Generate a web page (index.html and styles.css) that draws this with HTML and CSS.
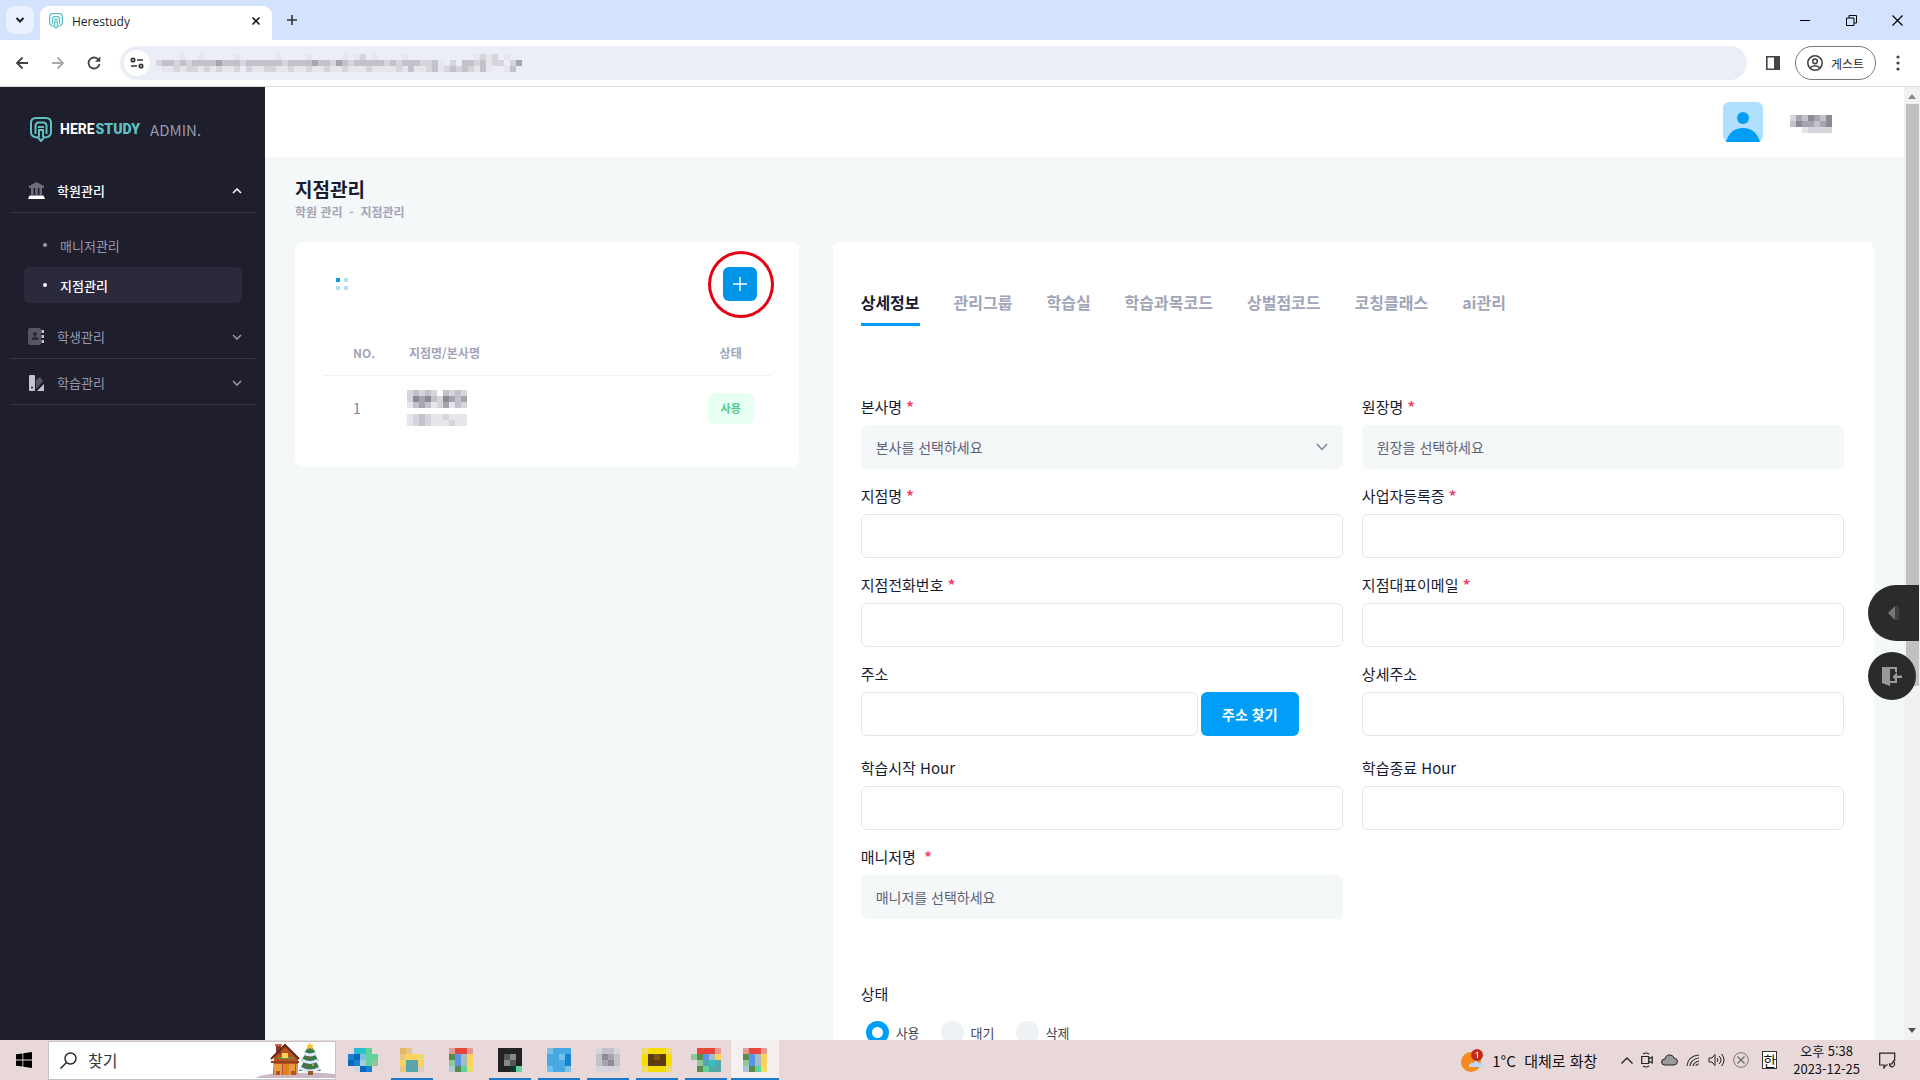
FILE: index.html
```html
<!DOCTYPE html>
<html lang="ko">
<head>
    <meta charset="UTF-8">
    <meta name="viewport" content="width=device-width, initial-scale=1.0">
    <link rel="stylesheet" href="styles.css">
    <title>Herestudy</title>
</head>
<body>
    <!-- browser -->
    <div class="tabstrip">
        <button class="tab-search" aria-label="탭 검색"><svg width="10" height="8" viewBox="0 0 10 8"><path d="M1.5 2l3.5 3.5L8.500 2" fill="none" stroke="#1f1f1f" stroke-width="2"/></svg></button>
        <div class="tab">
            <svg width="14" height="16" viewBox="0 0 22 25"><use href="#logo"/></svg>
            <span>Herestudy</span>
            <button aria-label="탭 닫기"><svg width="10" height="10" viewBox="0 0 10 10"><path d="M1.500 1.500l7 7m0-7l-7 7" stroke="#1f1f1f" stroke-width="1.700"/></svg></button>
        </div>
        <button class="new-tab" aria-label="새 탭"><svg width="12" height="12" viewBox="0 0 12 12"><path d="M6 1v10M1 6h10" stroke="#333" stroke-width="1.600"/></svg></button>
        <div class="window-buttons">
            <button aria-label="최소화"><svg width="10" height="10" viewBox="0 0 10 10"><path d="M0 5.500h10" stroke="#000"/></svg></button>
            <button aria-label="이전 크기로"><svg width="11" height="11" viewBox="0 0 11 11"><path d="M.5 3h7.500v7.500H.5zM3 3V.5h7.500V8H8" fill="none" stroke="#000"/></svg></button>
            <button aria-label="닫기"><svg width="11" height="11" viewBox="0 0 11 11"><path d="M.5.5l10 10m0-10l-10 10" stroke="#000" stroke-width="1.200"/></svg></button>
        </div>
    </div>

    <div class="toolbar">
        <button aria-label="뒤로"><svg width="14" height="14" viewBox="0 0 14 14"><path d="M13 7H2m5.500-5.500L2 7l5.500 5.500" fill="none" stroke="#444" stroke-width="1.800"/></svg></button>
        <button aria-label="앞으로"><svg width="14" height="14" viewBox="0 0 14 14"><path d="M1 7h11M6.500 1.500L12 7l-5.500 5.500" fill="none" stroke="#aaa" stroke-width="1.800"/></svg></button>
        <button aria-label="새로고침"><svg width="14" height="14" viewBox="0 0 14 14"><path d="M12 4.500A5.500 5.500 0 1 0 12.500 8" fill="none" stroke="#444" stroke-width="1.800"/><path d="M13.300.5v5.300H8z" fill="#444"/></svg></button>
        <div class="url">
            <span class="site-info"><svg width="14" height="12" viewBox="0 0 14 12"><g fill="none" stroke="#333" stroke-width="1.700"><circle cx="3" cy="3" r="1.700"/><circle cx="11" cy="9" r="1.700"/><path d="M7 3h6M1 9h6"/></g></svg></span>
            <svg class="mosaic" data-rows="....a..a.....a......a....a.....a.ab.a....a...........abab.a|bccbcbccccdcccbccccccbccccdccbdcbcccccbcbcccbbca.b.ccbcabb.bd|.aababbababaab.baabbaabaabaabaabaaabaaaabacaabcabcbcbaca..ac"></svg>
        </div>
        <button aria-label="측면 패널"><svg width="14" height="14" viewBox="0 0 14 14"><path d="M.8.8h12.400v12.400H.8z" fill="none" stroke="#444" stroke-width="1.600"/><path d="M8 1h6v12H8z" fill="#444"/></svg></button>
        <button class="guest">
            <svg width="16" height="16" viewBox="0 0 16 16"><g fill="none" stroke="#444" stroke-width="1.600"><circle cx="8" cy="8" r="7.200"/><circle cx="8" cy="6.300" r="2.300"/><path d="M3 13c2.500-3 7.500-3 10 0"/></g></svg>
            게스트
        </button>
        <button class="more" aria-label="메뉴"><svg width="4" height="16" viewBox="0 0 4 16" fill="#444"><circle cx="2" cy="2" r="1.600"/><circle cx="2" cy="8" r="1.600"/><circle cx="2" cy="14" r="1.600"/></svg></button>
    </div>

    <div class="page">
        <aside class="sidebar">
            <a class="brand" href="#">
                <svg width="22" height="25" viewBox="0 0 22 25">
                    <g id="logo" fill="none" stroke="#5fc2c2" stroke-width="2">
                        <path d="M6 1h10q5 0 5 5v9q0 4-4 5l-3 .5L11 24l-3-3.500-3-.5q-4-1-4-5V6q0-5 5-5z"/>
                        <path d="M5.500 17V9q0-3.500 3.500-3.500h4q3.500 0 3.500 3.500v8M8 10h6M8 13h6M9 13v7M13 13v7"/>
                    </g>
                </svg>
                <span class="brand-name">HERE<b>STUDY</b></span>
                <span class="brand-admin">ADMIN.</span>
            </a>
            <nav>
                <a class="menu open" href="#">
                    <svg width="17" height="17" viewBox="0 0 17 17"><path d="M8.500 0L16 4v2H1V4zM3 6h2.500v7H3zM7.200 6h2.600v7H7.200zM11.500 6H14v7h-2.500z" fill="#6d6c7c"/><path d="M1.500 13.500h14L17 17H0z" fill="#fff"/></svg>
                    학원관리
                    <svg class="arrow" width="10" height="6" viewBox="0 0 10 6"><path d="M1 5l4-4 4 4"/></svg>
                </a>
                <div class="submenu">
                    <a href="#">매니저관리</a>
                    <a class="active" href="#">지점관리</a>
                </div>
                <a class="menu" href="#">
                    <svg width="17" height="17" viewBox="0 0 17 17"><rect width="13" height="17" rx="2" fill="#565565"/><circle cx="7" cy="6" r="2" fill="#2b2a3a"/><path d="M3.500 12q0-3.500 3.500-3.500t3.500 3.500z" fill="#2b2a3a"/><path d="M13.500 2H16v3h-2.500zM13.500 7H16v3h-2.500zM13.500 12H16v3h-2.500z" fill="#c5c4d2"/></svg>
                    학생관리
                    <svg class="arrow" width="10" height="6" viewBox="0 0 10 6"><path d="M1 1l4 4 4-4"/></svg>
                </a>
                <a class="menu" href="#">
                    <svg width="17" height="17" viewBox="0 0 17 17"><rect x="1" y="1" width="6" height="16" rx="1" fill="#c5c4d2"/><circle cx="4" cy="13.500" r="1" fill="#1e1e2d"/><path d="M8 6l4-3 3 4-7 8z" fill="#565565"/><path d="M16 10v7H9z" fill="#c5c4d2"/></svg>
                    학습관리
                    <svg class="arrow" width="10" height="6" viewBox="0 0 10 6"><path d="M1 1l4 4 4-4"/></svg>
                </a>
            </nav>
        </aside>

        <main>
            <header>
                <svg class="avatar" width="40" height="40" viewBox="0 0 40 40"><rect width="40" height="40" rx="6" fill="#b0e0fd"/><circle cx="20" cy="16" r="6" fill="#009ef7"/><path d="M3 40q4-14 17-14t17 14z" fill="#009ef7"/></svg>
                <svg class="mosaic" data-rows="bdcedce|ceddcde|..abbbb"></svg>
            </header>

            <div class="title">
                <h1>지점관리</h1>
                <p>학원 관리 &nbsp;-&nbsp; 지점관리</p>
            </div>

            <div class="content">
                <section class="card list">
                    <div class="list-head">
                        <svg width="12" height="12" viewBox="0 0 12 12" fill="#b3e1fb"><path d="M0 0h4v4H0z" fill="#0c9ae8"/><path d="M8 0h4v4H8zM0 8h4v4H0zM8 8h4v4H8z"/></svg>
                        <button class="add" aria-label="지점 추가">
                            <svg width="14" height="14" viewBox="0 0 14 14"><path d="M7 0v14M0 7h14" stroke="#fff" stroke-width="1.400"/></svg>
                        </button>
                    </div>
                    <table>
                        <thead>
                            <tr><th class="no">NO.</th><th class="name">지점명/본사명</th><th class="state">상태</th></tr>
                        </thead>
                        <tbody>
                            <tr>
                                <td class="no">1</td>
                                <td><svg class="mosaic" data-rows="bcbcb.cbcb|bedecbedcd|acdcabdacb|..........|abcbaabaaa|abcbaaabaa"></svg></td>
                                <td class="state"><span class="badge">사용</span></td>
                            </tr>
                        </tbody>
                    </table>
                </section>

                <section class="card detail">
                    <nav class="tabs">
                        <a class="active" href="#">상세정보</a>
                        <a href="#">관리그룹</a>
                        <a href="#">학습실</a>
                        <a href="#">학습과목코드</a>
                        <a href="#">상벌점코드</a>
                        <a href="#">코칭클래스</a>
                        <a href="#">ai관리</a>
                    </nav>

                    <form>
                        <div class="field">
                            <label for="company">본사명 <i>*</i></label>
                            <div class="select">
                                <select id="company"><option>본사를 선택하세요</option></select>
                                <svg width="12" height="8" viewBox="0 0 12 8"><path d="M1 1l5 5.500L11 1" fill="none" stroke="#7e8299" stroke-width="1.500"/></svg>
                            </div>
                        </div>
                        <div class="field">
                            <label for="owner">원장명 <i>*</i></label>
                            <input class="solid" id="owner" type="text" placeholder="원장을 선택하세요">
                        </div>
                        <div class="field">
                            <label for="branch">지점명 <i>*</i></label>
                            <input id="branch" type="text">
                        </div>
                        <div class="field">
                            <label for="license">사업자등록증 <i>*</i></label>
                            <input id="license" type="text">
                        </div>
                        <div class="field">
                            <label for="tel">지점전화번호 <i>*</i></label>
                            <input id="tel" type="text">
                        </div>
                        <div class="field">
                            <label for="email">지점대표이메일 <i>*</i></label>
                            <input id="email" type="text">
                        </div>
                        <div class="field address">
                            <label for="addr">주소</label>
                            <div class="address-row">
                                <input id="addr" type="text">
                                <button type="button">주소 찾기</button>
                            </div>
                        </div>
                        <div class="field">
                            <label for="addr2">상세주소</label>
                            <input id="addr2" type="text">
                        </div>
                        <div class="field">
                            <label for="start">학습시작 Hour</label>
                            <input id="start" type="text">
                        </div>
                        <div class="field">
                            <label for="end">학습종료 Hour</label>
                            <input id="end" type="text">
                        </div>
                        <div class="field">
                            <label for="manager">매니저명 &nbsp;<i>*</i></label>
                            <input class="solid" id="manager" type="text" placeholder="매니저를 선택하세요">
                        </div>
                        <fieldset>
                            <legend>상태</legend>
                            <div class="radios">
                                <label><input type="radio" name="state" checked>사용</label>
                                <label><input type="radio" name="state">대기</label>
                                <label><input type="radio" name="state">삭제</label>
                            </div>
                        </fieldset>
                    </form>
                </section>
            </div>
        </main>

        <div class="scrollbar">
            <svg width="8" height="5" viewBox="0 0 8 5"><path d="M4 0l4 5H0z" fill="#8b8b8b"/></svg>
            <div class="thumb"></div>
            <svg width="8" height="5" viewBox="0 0 8 5"><path d="M0 0h8L4 5z" fill="#505050"/></svg>
        </div>

        <!-- click guide -->
        <div class="marker"></div>

        <!-- remote tool -->
        <div class="remote">
            <button class="remote-open" aria-label="열기"><svg width="11" height="16" viewBox="0 0 11 16"><path d="M7 1v14L0 8z" fill="#777"/><path d="M8 1v14M10 1v14" stroke="#555"/></svg></button>
            <button class="remote-exit" aria-label="나가기"><svg width="20" height="20" viewBox="0 0 20 20"><path d="M0 1h15v5h-2V3H8v17l-8-3z" fill="#999"/><path d="M8 17h7v-3h-2v1H8zM20 9.500h-5V6l-4.500 5 4.500 4.500V12h5z" fill="#999"/></svg></button>
        </div>
    </div>

    <!-- taskbar -->
    <footer class="taskbar">
        <button class="start" aria-label="시작"><svg width="16" height="16" viewBox="0 0 16 16"><path d="M0 2.300L6.500 1.400v6.200H0zM7.300 1.300L16 0v7.600H7.300zM0 8.400h6.500v6.200L0 13.700zM7.300 8.400H16V16l-8.700-1.300z"/></svg></button>
        <label class="search">
            <svg width="17" height="17" viewBox="0 0 17 17"><circle cx="10.500" cy="6.500" r="5.500" fill="none" stroke="#222" stroke-width="1.400"/><path d="M6.500 10.500L.5 16.500" stroke="#222" stroke-width="1.400"/></svg>
            <input type="text" placeholder="찾기" aria-label="찾기">
            <svg width="80" height="36" viewBox="0 0 80 36">
                <path d="M0 36q12-6 35-4 20-3 45 0v4z" fill="#cdb9c6"/>
                <path d="M19 14L30 3l13 14v16H18z" fill="#b9531b"/>
                <path d="M21 3h5v9h-5z" fill="#8b3a2a"/><path d="M20 2h7v2h-7z" fill="#d9604a"/>
                <path d="M16 17L30 3l14 14" fill="none" stroke="#5b2b18" stroke-width="2"/>
                <path d="M23 15h16v2H23z" fill="#6d8a4a"/><path d="M16 19h28v2H16z" fill="#8e4423"/>
                <path d="M27 11h6v5h-6z" fill="#ffd257"/><path d="M21 22h4v7h-4zM36 22h4v7h-4z" fill="#f59b23"/>
                <path d="M28 22h6v11h-6z" fill="#e0831d"/><path d="M20 22v11M26 22v11M35 22v11M42 22v11" stroke="#f8dfc0"/>
                <path d="M55 2l6 9h-2l5 8h-3l5 10H44l5-10h-3l5-8h-2z" fill="#39794b"/>
                <path d="M49 11q6 4 12 0M47 18q8 5 16 0M45 26q10 6 20 0" fill="none" stroke="#dfe8fa" stroke-width="3"/>
                <path d="M55 0l1 3 3 0-2 2 1 3-3-2-3 2 1-3-2-2h3z" fill="#f7c22d"/>
                <path d="M53 29h5v4h-5z" fill="#9b5a2c"/><circle cx="53" cy="15" r="1" fill="#d33"/><circle cx="58" cy="23" r="1" fill="#e8b020"/><circle cx="51" cy="24" r="1" fill="#d33"/>
            </svg>
        </label>
        <div class="apps">
            <button aria-label="Edge"><svg class="mosaic" data-rows=".QTG.|BEWGG|EBwGg|.bEB."></svg></button>
            <button class="running" aria-label="탐색기"><svg class="mosaic" data-rows="OF..|FYYy|YttY|Fttf"></svg></button>
            <button aria-label="Chrome"><svg class="mosaic" data-rows="rRRr|NCLY|gCLY|wNGy"></svg></button>
            <button class="running" aria-label="앱"><svg class="mosaic" data-rows="KKKK|KHhK|KhHK|KKJG"></svg></button>
            <button class="running" aria-label="앱"><svg class="mosaic" data-rows="WSSS|SSsB|SSSB|sSSW"></svg></button>
            <button class="running" aria-label="앱"><svg class="mosaic" data-rows="bccb|cedc|cdec|bbbb"></svg></button>
            <button class="running" aria-label="카카오톡"><svg class="mosaic" data-rows="yVVVy|VMmMV|VMMMV|yVVVy"></svg></button>
            <button class="running" aria-label="Chrome"><svg class="mosaic" data-rows=".RRRr|gNCLY|.gtTt|.NGtt"></svg></button>
            <button class="running current" aria-label="Chrome"><svg class="mosaic" data-rows="rRRr|NCLY|gCLY|wNGy"></svg></button>
        </div>
        <div class="tray">
            <svg width="23" height="23" viewBox="0 0 23 23"><circle cx="10" cy="13" r="10" fill="#f58a1f"/><path d="M8 18h12q3 0 2-3-1-2-4-1-3-4-6 0-5 0-4 4z" fill="#bcd8f7"/><circle cx="16" cy="6" r="6" fill="#c42b1c"/><path d="M14.500 4.500L16.500 3v6" fill="none" stroke="#fff"/></svg>
            <span class="weather">1°C&nbsp; 대체로 화창</span>
            <svg class="caret" width="12" height="7" viewBox="0 0 12 7"><path d="M.5 6.500L6 1l5.500 5.500" fill="none" stroke="#222" stroke-width="1.300"/></svg>
            <svg width="12" height="16" viewBox="0 0 12 16"><path d="M.7 4.500h7v7h-7zM7.700 7l3.500-2v6l-3.500-2M2 2q3-2 6 0M2 14q3 2 6 0" fill="none" stroke="#222" stroke-width="1.200"/></svg>
            <svg width="17" height="12" viewBox="0 0 17 12"><path d="M4 11q-3.500 0-3.500-3T4 5q1-4.500 5-4 3 0 4 3 3.500.5 3.500 3.500T13 11z" fill="#999" stroke="#222"/></svg>
            <svg width="14" height="13" viewBox="0 0 14 13"><g fill="none" stroke="#333" stroke-width="1.200"><path d="M1 12Q2 2 13 1M4 12q1-7 9-8M7 12q1-4 6-5M10 12q0-2 3-2"/></g></svg>
            <svg width="17" height="14" viewBox="0 0 17 14"><path d="M1 5h3l3-3.500v11L4 9H1zM9 5q2 2 0 4M11 3q4 4 0 8M13.500 1q5 6 0 12" fill="none" stroke="#222"/></svg>
            <svg width="16" height="16" viewBox="0 0 16 16"><circle cx="8" cy="8" r="7.300" fill="none" stroke="#777"/><path d="M4.500 4.500l7 7m0-7l-7 7" stroke="#777" stroke-width="1.600"/></svg>
            <span class="ime">한</span>
            <span class="clock">오후 5:38<br>2023-12-25</span>
            <svg width="17" height="17" viewBox="0 0 17 17"><path d="M9 13H7l-2 3v-3H.7V1.200h15V9" fill="none" stroke="#222" stroke-width="1.200"/><path d="M14.500 9q2.500 4-1 6-3 0-3-3 2.500 1 4-3z" fill="none" stroke="#222" stroke-width="1.200"/></svg>
        </div>
    </footer>

    <script>
        // blocked-out names and icons, one letter per 6px block
        var colors = {
            a: '#e6e6ec', b: '#d6d5dc', c: '#c3c2cb', d: '#a6a5ae', e: '#8c8a93',
            Q: '#2db7d6', T: '#2fc3c6', G: '#5fd39a', B: '#1583d2', E: '#0b68bf', W: '#7cc0e6', w: '#a9c9d8', g: '#8fc79a',
            O: '#dfb765', F: '#e6c784', f: '#e0cdb4', Y: '#fdd25c', y: '#eedc6a', t: '#58a6ab',
            R: '#e8463c', r: '#e49a94', N: '#5a8a4c', C: '#5a93ea', L: '#a7bcc0',
            K: '#232323', H: '#555', h: '#888', J: '#0c3b2c',
            S: '#48a8e2', s: '#6fc2f0', V: '#f7dc00', M: '#5d3b0e', m: '#7a5410'
        };
        document.querySelectorAll('.mosaic').forEach(function (svg) {
            var rows = svg.dataset.rows.split('|');
            var html = '';
            rows.forEach(function (row, y) {
                for (var x = 0; x < row.length; x++) {
                    if (row[x] !== '.') {
                        html += '<rect x="' + x * 6 + '" y="' + y * 6 + '" width="6" height="6" fill="' + colors[row[x]] + '"/>';
                    }
                }
            });
            svg.setAttribute('width', rows[1].length * 6);
            svg.setAttribute('height', rows.length * 6);
            svg.innerHTML = html;
        });
    </script>
</body>
</html>
```
FILE: styles.css
```css
* {
    box-sizing: border-box;
}

body {
    display: flex;
    flex-direction: column;
    height: 100vh;
    margin: 0;
    overflow: hidden;
    font-family: 'Noto Sans CJK KR', sans-serif;
    font-size: 13px;
    color: #181c32;
    background: #fff;
}

button {
    padding: 0;
    border: 0;
    background: none;
    font-family: inherit;
    display: flex;
    align-items: center;
    justify-content: center;
}

a {
    text-decoration: none;
}

svg {
    display: block;
    flex: none;
}

/* browser */
.tabstrip {
    display: flex;
    align-items: center;
    height: 40px;
    flex: none;
    padding-left: 6px;
    background: #d3e3fd;
}

.tab-search {
    width: 28px;
    height: 28px;
    border-radius: 9px;
    background: #e9f1fe;
}

.tab {
    display: flex;
    align-items: center;
    align-self: flex-end;
    width: 232px;
    height: 34px;
    margin-left: 6px;
    padding: 0 11px 4px 9px;
    border-radius: 9px 9px 0 0;
    background: #fff;
    font-family: 'Open Sans', sans-serif;
    font-size: 12px;
    color: #1f1f1f;
}

.tab span {
    flex: 1;
    padding-left: 9px;
}

.new-tab {
    width: 40px;
    height: 40px;
}

.window-buttons {
    display: flex;
    margin-left: auto;
}

.window-buttons button {
    width: 46px;
    height: 40px;
}

.toolbar {
    display: flex;
    align-items: center;
    flex: none;
    height: 47px;
    padding: 0 20px 0 15px;
    border-bottom: 1px solid #dcdcdc;
    background: #fff;
}

.toolbar > button {
    margin-right: 22px;
}

.url {
    display: flex;
    align-items: center;
    flex: 1;
    height: 34px;
    margin: 0 19px 0 -3px;
    padding-left: 4px;
    border-radius: 17px;
    background: #ebeef7;
}

.site-info {
    display: flex;
    align-items: center;
    justify-content: center;
    width: 26px;
    height: 26px;
    margin-right: 6px;
    border-radius: 50%;
    background: #fff;
}

.toolbar .guest {
    gap: 8px;
    width: 81px;
    height: 34px;
    margin: 0 20px 0 -7px;
    border: 1px solid #777;
    border-radius: 17px;
    font-size: 12px;
    color: #1f1f1f;
}

.toolbar .more {
    margin-right: 0;
}

/* page */
.page {
    position: relative;
    display: flex;
    flex: 1;
    min-height: 0;
}

.sidebar {
    flex: none;
    width: 265px;
    background: #1e1e2d;
}

.brand {
    display: flex;
    align-items: center;
    height: 84px;
    padding-left: 30px;
}

.brand-name {
    margin: 0 10px 0 8px;
    font-family: Roboto, sans-serif;
    font-size: 14px;
    font-weight: 700;
    color: #fff;
}

.brand-name b {
    margin-left: 1px;
    color: #5fc2c2;
}

.brand-admin {
    font-size: 15px;
    color: #9899ac;
}

.menu {
    display: flex;
    align-items: center;
    gap: 12px;
    height: 46px;
    margin: 0 10px 0 11px;
    padding: 2px 13px 0 17px;
    border-bottom: 1px solid #393948;
    color: #9899ac;
}

.menu.open {
    height: 42px;
    padding: 0 13px 2px 17px;
    color: #fff;
    font-weight: 500;
}

.arrow {
    margin-left: auto;
    fill: none;
    stroke: currentColor;
    stroke-width: 1.5px;
}

.submenu {
    padding: 14px 23px 6px 24px;
}

.submenu a {
    display: flex;
    align-items: center;
    height: 36px;
    margin-bottom: 4px;
    padding-left: 19px;
    border-radius: 6px;
    color: #9899ac;
}

.submenu a::before {
    content: '';
    width: 4px;
    height: 4px;
    margin-right: 13px;
    border-radius: 50%;
    background: currentColor;
}

.submenu .active {
    background: #2a2a3c;
    color: #fff;
    font-weight: 500;
}

main {
    flex: 1;
    min-width: 0;
    overflow: hidden;
    background: #f4f8f9;
}

header {
    display: flex;
    align-items: center;
    justify-content: flex-end;
    gap: 27px;
    height: 70px;
    padding: 0 72px 0 0;
    background: #fff;
}

header .mosaic {
    margin-top: 4px;
}

.title {
    padding: 18px 30px 21px;
}

h1 {
    margin: 0;
    font-size: 19px;
    line-height: 28px;
    font-weight: 700;
}

.title p {
    margin: 0;
    font-size: 12px;
    line-height: 18px;
    font-weight: 700;
    color: #a1a5b7;
}

.content {
    display: grid;
    grid-template-columns: calc((100% - 68px) / 3) 1fr;
    gap: 34px;
    align-items: start;
    padding: 0 30px;
}

.card {
    border-radius: 8px;
    background: #fff;
}

.list {
    padding: 25px 28px 26px;
}

.list-head {
    display: flex;
    align-items: center;
    justify-content: space-between;
    margin-bottom: 30px;
    padding: 0 14px 0 13px;
}

.add {
    width: 34px;
    height: 34px;
    border-radius: 6px;
    background: #0095e8;
}

table {
    width: 100%;
    border-collapse: collapse;
    table-layout: fixed;
}

th {
    height: 44px;
    padding: 0;
    border-bottom: 1px solid #eff2f5;
    font-size: 12px;
    font-weight: 700;
    text-align: left;
    color: #a1a5b7;
}

td {
    height: 66px;
    padding: 0;
    font-size: 14px;
    color: #7e8299;
}

.no {
    width: 84px;
    padding-left: 30px;
}

.name {
    padding-left: 2px;
}

.state {
    width: 80px;
    text-align: center;
}

.badge {
    display: inline-block;
    padding: 0 13px;
    border-radius: 6px;
    background: #e8fff3;
    font-size: 11px;
    font-weight: 700;
    line-height: 31px;
    color: #50cd89;
}

.detail {
    padding: 48px 30px 40px 28px;
}

.tabs {
    display: flex;
    gap: 34px;
    margin-bottom: 71px;
}

.tabs a {
    padding-bottom: 9px;
    border-bottom: 3px solid transparent;
    font-size: 16px;
    font-weight: 700;
    line-height: 24px;
    color: #a1a5b7;
}

.tabs .active {
    border-color: #009ef7;
    color: #181c32;
}

form {
    display: grid;
    grid-template-columns: 1fr 1fr;
    gap: 17px 19px;
}

.field label,
legend {
    display: block;
    margin-bottom: 8px;
    padding: 0;
    font-size: 15px;
    line-height: 20px;
}

.field i {
    font-style: normal;
    font-weight: 700;
    color: #f1416c;
}

.field input,
select {
    display: block;
    width: 100%;
    height: 44px;
    padding: 0 14px;
    border: 1px solid #e4e6ef;
    border-radius: 6px;
    background: #fff;
    font-family: inherit;
    font-size: 14px;
    color: #5e6278;
}

.field .solid,
select {
    border-color: #f4f8f9;
    background: #f4f8f9;
    appearance: none;
}

::placeholder {
    color: #5e6278;
    opacity: 1;
}

.select {
    position: relative;
}

.select svg {
    position: absolute;
    top: 18px;
    right: 15px;
    pointer-events: none;
}

.address {
    margin-bottom: 5px;
}

.address-row {
    display: flex;
    gap: 3px;
    padding-right: 44px;
}

.address-row button {
    flex: none;
    width: 98px;
    border-radius: 6px;
    background: #009ef7;
    font-size: 14px;
    font-weight: 700;
    color: #fff;
}

fieldset {
    grid-column: 1 / -1;
    margin: 48px 0 0;
    padding: 0;
    border: 0;
}

.radios {
    display: flex;
    gap: 21px;
    padding: 9px 5px 0;
}

.radios label {
    display: flex;
    align-items: center;
    gap: 7px;
    color: #3f4254;
}

.radios input {
    width: 23px;
    height: 23px;
    margin: 0;
    border-radius: 50%;
    background: #eff2f5;
    appearance: none;
}

.radios input:checked {
    border: 6px solid #009ef7;
    background: #fff;
}

.scrollbar {
    display: flex;
    flex-direction: column;
    align-items: center;
    flex: none;
    width: 16px;
    padding: 7px 0;
    background: #f1f1f1;
}

.thumb {
    width: 13px;
    height: 62%;
    margin: 5px 0 auto;
    background: #c1c1c1;
}

.marker {
    position: absolute;
    top: 164px;
    left: 708px;
    width: 66px;
    height: 67px;
    border: 3px solid #e60012;
    border-radius: 50%;
}

.remote {
    position: absolute;
    top: 498px;
    right: 1px;
}

.remote button {
    background: #2b2b2b;
}

.remote-open {
    width: 51px;
    height: 56px;
    margin-bottom: 11px;
    border-radius: 28px 0 0 28px;
}

.remote-exit {
    width: 48px;
    height: 48px;
    border-radius: 50%;
}

/* taskbar */
.taskbar {
    display: flex;
    align-items: center;
    flex: none;
    height: 40px;
    background: #e8d8da;
    color: #111;
}

.start {
    width: 48px;
    height: 40px;
}

.search {
    display: flex;
    align-items: center;
    width: 288px;
    height: 39px;
    padding-left: 11px;
    border: 1px solid #c4c4c8;
    background: #fff;
}

.search input {
    flex: 1;
    min-width: 0;
    padding: 0 11px;
    border: 0;
    font-family: inherit;
    font-size: 16px;
}

.search ::placeholder {
    color: #333;
}

.apps {
    display: flex;
    gap: 1px;
    margin-left: 3px;
}

.apps button {
    position: relative;
    width: 48px;
    height: 40px;
}

.apps .running::after {
    content: '';
    position: absolute;
    bottom: 0;
    left: 3px;
    right: 3px;
    height: 2px;
    background: #1a7ac8;
}

.apps .current {
    background: #f6eff0;
}

.apps .current::after {
    left: 0;
    right: 0;
}

.tray {
    display: flex;
    align-items: center;
    gap: 8px;
    margin-left: auto;
    padding-right: 24px;
}

.weather {
    font-size: 15px;
}

.caret {
    margin-left: 16px;
}

.ime {
    margin: 0 8px 0 5px;
    border: 1px solid #333;
    background: #fff;
    font-size: 14px;
    line-height: 16px;
}

.clock {
    margin-right: 11px;
    font-size: 13px;
    line-height: 18px;
    text-align: center;
}
```
